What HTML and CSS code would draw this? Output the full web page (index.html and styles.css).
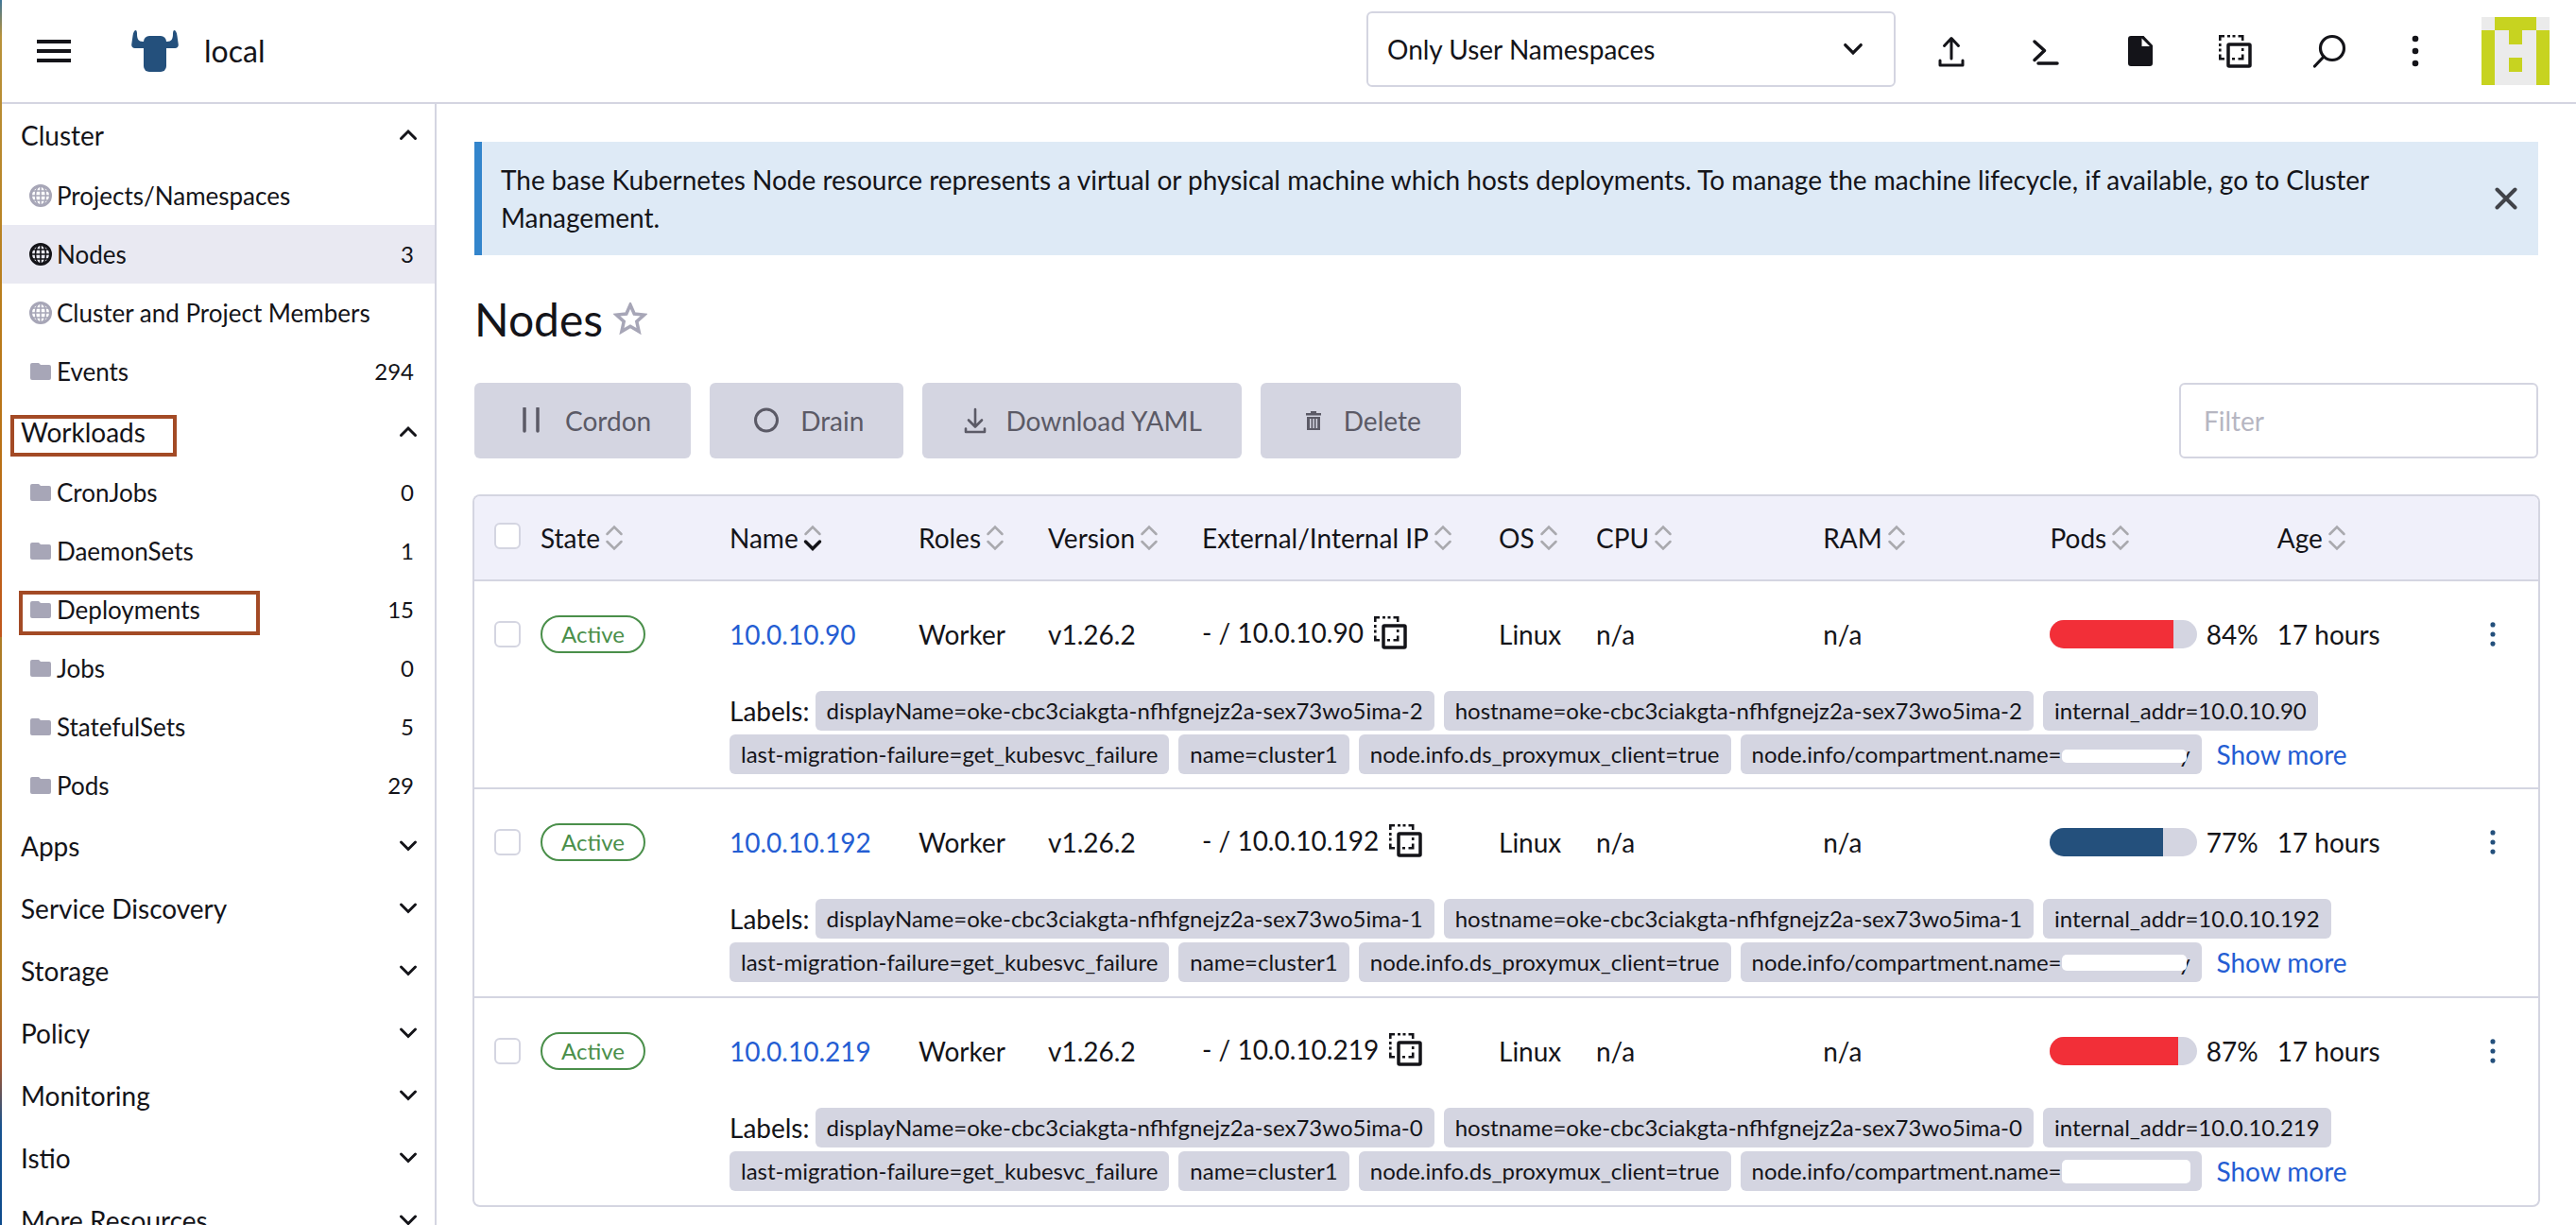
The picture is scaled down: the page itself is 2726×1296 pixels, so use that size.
FILE: index.html
```html
<!DOCTYPE html>
<html lang="en">
<head>
<meta charset="utf-8">
<meta name="viewport" content="width=device-width, initial-scale=1">
<title>Nodes - local</title>
<link rel="stylesheet" href="styles.css">
</head>
<body>
<svg class="sprite" aria-hidden="true">
  <symbol id="i-chev-down" viewBox="0 0 20 20"><path d="M2.5 6l7.5 7.500 7.500-7.500" fill="none" stroke="currentColor" stroke-width="3" stroke-linecap="round"/></symbol>
  <symbol id="i-chev-up" viewBox="0 0 20 20"><path d="M2.500 13.500l7.500-7.500 7.500 7.500" fill="none" stroke="currentColor" stroke-width="3" stroke-linecap="round"/></symbol>
  <symbol id="i-globe" viewBox="0 0 24 24"><g fill="none" stroke="currentColor"><circle cx="12" cy="12" r="10.500" stroke-width="3"/><path d="M12 1v22M1.500 12h21M3 7h18M3 17h18" stroke-width="1.600"/><ellipse cx="12" cy="12" rx="5.500" ry="10.500" stroke-width="1.600"/></g></symbol>
  <symbol id="i-folder" viewBox="0 0 24 24"><path d="M3 3h7l2 2h9a2 2 0 0 1 2 2v12a2 2 0 0 1-2 2H3a2 2 0 0 1-2-2V5a2 2 0 0 1 2-2z" fill="currentColor"/></symbol>
  <symbol id="i-copy" viewBox="0 0 36 36"><g fill="none" stroke="currentColor" stroke-width="2.600"><path d="M2.300 7V2.300H7M21.500 2.300h4.700V7M2.300 21.500v4.700H7M21.500 26.200h4.700v-4.700M10 2.300h3M15.500 2.300h3M2.300 10v3M2.300 15.500v3M15 26.200h3M26.200 15v3"/><rect x="11" y="11" width="23" height="23" rx="1" stroke-width="3.500"/></g></symbol>
  <symbol id="i-dots" viewBox="0 0 36 36"><circle cx="18" cy="5" r="3.300"/><circle cx="18" cy="18" r="3.300"/><circle cx="18" cy="31" r="3.300"/></symbol>
  <symbol id="i-sort" viewBox="0 0 20 28"><path d="M2.500 10L10 2.500l7.500 7.500" fill="none" stroke="#a9a9ae" stroke-width="2.500" stroke-linecap="round"/><path d="M2.500 18l7.500 7.500 7.500-7.500" fill="none" stroke="#a9a9ae" stroke-width="2.500" stroke-linecap="round"/></symbol>
  <symbol id="i-sort-on" viewBox="0 0 20 28"><path d="M2.500 10L10 2.500l7.500 7.500" fill="none" stroke="#a9a9ae" stroke-width="2.500" stroke-linecap="round"/><path d="M2.500 18l7.500 7.500 7.500-7.500" fill="none" stroke="#141419" stroke-width="3.500" stroke-linecap="round"/></symbol>
</svg>

<div class="window">
<div class="desktop-edge"></div>
<div class="app">
  <header class="topbar">
    <button class="icon-btn menu-btn" aria-label="Menu"><svg width="36" height="24" viewBox="0 0 36 24"><path d="M0 2h36M0 12h36M0 22h36" stroke="#141419" stroke-width="4"/></svg></button>
    <a class="brand" href="#">
      <svg width="50" height="44" viewBox="0 0 50 44" fill="#24507c" aria-hidden="true"><path d="M4.500 0C5.500 0 6 1.500 6 4c0 5 1.500 8 6 8h26c4.500 0 6-3 6-8 0-2.500.500-4 1.500-4 1.500 0 2.500 2.500 3 6l1.200 8.500c.500 3-1 4.500-3.500 4.500H3.800C1.300 19-.200 17.500.300 14.500L1.500 6c.500-3.500 1.500-6 3-6z"/><rect x="13" y="6" width="24" height="38" rx="6"/></svg>
      <span>local</span>
    </a>
    <div class="ns-select">
      <select aria-label="Namespaces"><option>Only User Namespaces</option></select>
      <svg class="ns-chev" width="22" height="22"><use href="#i-chev-down"/></svg>
    </div>
    <div class="tools">
      <button class="icon-btn" aria-label="Import YAML"><svg width="36" height="36" viewBox="0 0 36 36" fill="none" stroke="currentColor" stroke-width="3" stroke-linecap="round" stroke-linejoin="round"><path d="M18 26V5M10.500 12.500L18 4.500l7.500 8M6 28v5h24v-5"/></svg></button>
      <button class="icon-btn" aria-label="Kubectl shell"><svg width="36" height="36" viewBox="0 0 36 36" fill="none" stroke="currentColor" stroke-width="3.500" stroke-linecap="round" stroke-linejoin="round"><path d="M6 8l10.500 9.500L6 27.500M10 31h20"/></svg></button>
      <button class="icon-btn" aria-label="Download KubeConfig"><svg width="36" height="36" viewBox="0 0 36 36"><path fill="currentColor" fill-rule="evenodd" d="M8 2h13.500L31 12v19a3 3 0 0 1-3 3H8a3 3 0 0 1-3-3V5a3 3 0 0 1 3-3zm11.500 2.500V13H28z"/></svg></button>
      <button class="icon-btn" aria-label="Copy KubeConfig"><svg width="36" height="36"><use href="#i-copy"/></svg></button>
      <button class="icon-btn" aria-label="Search"><svg width="36" height="36" viewBox="0 0 36 36" fill="none" stroke="currentColor" stroke-width="3.200" stroke-linecap="round"><circle cx="21" cy="15" r="12.500"/><path d="M12 24l-9.500 10"/></svg></button>
      <button class="icon-btn dots-btn" aria-label="More"><svg width="36" height="36" fill="currentColor"><use href="#i-dots"/></svg></button>
      <button class="icon-btn" aria-label="User"><svg width="72" height="72" viewBox="0 0 5 5" shape-rendering="crispEdges"><path fill="#ebebeb" d="M0 0h5v5H0z"/><path fill="#c7d320" d="M1 0h3v1H3v1H2V1H1zM0 1h1v4H0zM4 1h1v4H4zM2 3h1v1H2z"/></svg></button>
    </div>
  </header>

  <div class="body">
  <nav class="sidebar" aria-label="Cluster">
    <button class="group">Cluster<svg width="20" height="20"><use href="#i-chev-up"/></svg></button>
    <a class="item" href="#"><svg width="24" height="24"><use href="#i-globe"/></svg><span>Projects/Namespaces</span></a>
    <a class="item active" href="#"><svg width="24" height="24"><use href="#i-globe"/></svg><span>Nodes</span><span class="count">3</span></a>
    <a class="item" href="#"><svg width="24" height="24"><use href="#i-globe"/></svg><span>Cluster and Project Members</span></a>
    <a class="item" href="#"><svg width="24" height="24"><use href="#i-folder"/></svg><span>Events</span><span class="count">294</span></a>
    <button class="group marked">Workloads<svg width="20" height="20"><use href="#i-chev-up"/></svg></button>
    <a class="item" href="#"><svg width="24" height="24"><use href="#i-folder"/></svg><span>CronJobs</span><span class="count">0</span></a>
    <a class="item" href="#"><svg width="24" height="24"><use href="#i-folder"/></svg><span>DaemonSets</span><span class="count">1</span></a>
    <a class="item marked" href="#"><svg width="24" height="24"><use href="#i-folder"/></svg><span>Deployments</span><span class="count">15</span></a>
    <a class="item" href="#"><svg width="24" height="24"><use href="#i-folder"/></svg><span>Jobs</span><span class="count">0</span></a>
    <a class="item" href="#"><svg width="24" height="24"><use href="#i-folder"/></svg><span>StatefulSets</span><span class="count">5</span></a>
    <a class="item" href="#"><svg width="24" height="24"><use href="#i-folder"/></svg><span>Pods</span><span class="count">29</span></a>
    <button class="group">Apps<svg width="20" height="20"><use href="#i-chev-down"/></svg></button>
    <button class="group">Service Discovery<svg width="20" height="20"><use href="#i-chev-down"/></svg></button>
    <button class="group">Storage<svg width="20" height="20"><use href="#i-chev-down"/></svg></button>
    <button class="group">Policy<svg width="20" height="20"><use href="#i-chev-down"/></svg></button>
    <button class="group">Monitoring<svg width="20" height="20"><use href="#i-chev-down"/></svg></button>
    <button class="group">Istio<svg width="20" height="20"><use href="#i-chev-down"/></svg></button>
    <button class="group">More Resources<svg width="20" height="20"><use href="#i-chev-down"/></svg></button>
  </nav>

  <main class="main">
    <div class="banner">
      <p>The base Kubernetes Node resource represents a virtual or physical machine which hosts deployments. To manage the machine lifecycle, if available, go to Cluster Management.</p>
      <button class="icon-btn" aria-label="Close"><svg width="24" height="24" viewBox="0 0 24 24"><path d="M2.500 2.500l19 19M21.500 2.500l-19 19" stroke="#414349" stroke-width="4" stroke-linecap="round"/></svg></button>
    </div>

    <div class="title">
      <h1>Nodes</h1>
      <button class="icon-btn" aria-label="Favorite"><svg width="36" height="36" viewBox="0 0 36 36"><path d="M18 2.500l4.200 9.500 10.500 1.100-7.900 7 2.300 10.500-9.100-5.400-9.100 5.400 2.300-10.500-7.900-7L13.800 12z" fill="none" stroke="#a7a6b7" stroke-width="3.500"/></svg></button>
    </div>

    <div class="actions">
      <button class="btn"><svg width="36" height="28" viewBox="0 0 36 28" fill="none" stroke="currentColor" stroke-width="3.500" stroke-linecap="round"><path d="M11 1v24M25 1v24"/></svg>Cordon</button>
      <button class="btn"><svg width="36" height="28" viewBox="0 0 36 28" fill="none" stroke="currentColor" stroke-width="3"><circle cx="18" cy="13.500" r="11.500"/></svg>Drain</button>
      <button class="btn"><svg width="28" height="28" viewBox="0 0 28 28" fill="none" stroke="currentColor" stroke-width="2.600" stroke-linecap="round" stroke-linejoin="round"><path d="M14 2v18M7 13.500l7 7 7-7M4 22.500V26h20v-3.500"/></svg>Download YAML</button>
      <button class="btn"><svg width="28" height="28" viewBox="0 0 28 28"><path fill="currentColor" fill-rule="evenodd" d="M6 6h5V4h6v2h5v2.500H6zM7 10h14v14H7zm3 2v10h1.500V12zm3.300 0v10h1.500V12zm3.300 0v10h1.500V12z"/></svg>Delete</button>
      <input class="filter" type="text" placeholder="Filter" aria-label="Filter">
    </div>

    <table class="nodes">
      <colgroup><col class="c-check"><col class="c-state"><col class="c-name"><col class="c-roles"><col class="c-version"><col class="c-ip"><col class="c-os"><col class="c-meter"><col class="c-meter"><col class="c-meter"><col></colgroup>
      <thead>
        <tr>
          <th><input type="checkbox" aria-label="Select all"></th>
          <th><span class="th">State<svg width="20" height="28"><use href="#i-sort"/></svg></span></th>
          <th><span class="th">Name<svg width="20" height="28"><use href="#i-sort-on"/></svg></span></th>
          <th><span class="th">Roles<svg width="20" height="28"><use href="#i-sort"/></svg></span></th>
          <th><span class="th">Version<svg width="20" height="28"><use href="#i-sort"/></svg></span></th>
          <th><span class="th">External/Internal IP<svg width="20" height="28"><use href="#i-sort"/></svg></span></th>
          <th><span class="th">OS<svg width="20" height="28"><use href="#i-sort"/></svg></span></th>
          <th><span class="th">CPU<svg width="20" height="28"><use href="#i-sort"/></svg></span></th>
          <th><span class="th">RAM<svg width="20" height="28"><use href="#i-sort"/></svg></span></th>
          <th><span class="th">Pods<svg width="20" height="28"><use href="#i-sort"/></svg></span></th>
          <th colspan="2"><span class="th">Age<svg width="20" height="28"><use href="#i-sort"/></svg></span></th>
        </tr>
      </thead>
      <tbody>
        <tr class="node">
          <td><input type="checkbox" aria-label="Select 10.0.10.90"></td>
          <td><span class="badge">Active</span></td>
          <td><a href="#">10.0.10.90</a></td>
          <td>Worker</td>
          <td>v1.26.2</td>
          <td class="ip-cell"><span class="ip">- / 10.0.10.90<button class="icon-btn" aria-label="Copy IP"><svg width="36" height="36"><use href="#i-copy"/></svg></button></span></td>
          <td>Linux</td>
          <td>n/a</td>
          <td>n/a</td>
          <td><span class="pods"><span class="bar"><span class="fill high" style="width:84%"></span></span>84%</span></td>
          <td>17 hours</td>
          <td class="more"><button class="icon-btn" aria-label="Actions"><svg width="28" height="28" fill="currentColor"><use href="#i-dots"/></svg></button></td>
        </tr>
        <tr class="labels">
          <td colspan="2"></td>
          <td colspan="10">
            <div class="chips first"><span>Labels:</span><span class="chip">displayName=oke-cbc3ciakgta-nfhfgnejz2a-sex73wo5ima-2</span><span class="chip">hostname=oke-cbc3ciakgta-nfhfgnejz2a-sex73wo5ima-2</span><span class="chip">internal_addr=10.0.10.90</span></div>
            <div class="chips"><span class="chip">last-migration-failure=get_kubesvc_failure</span><span class="chip">name=cluster1</span><span class="chip">node.info.ds_proxymux_client=true</span><span class="chip">node.info/compartment.name=<span class="hidden-name thin">y</span></span><a class="show-more" href="#">Show more</a></div>
          </td>
        </tr>
        <tr class="node">
          <td><input type="checkbox" aria-label="Select 10.0.10.192"></td>
          <td><span class="badge">Active</span></td>
          <td><a href="#">10.0.10.192</a></td>
          <td>Worker</td>
          <td>v1.26.2</td>
          <td class="ip-cell"><span class="ip">- / 10.0.10.192<button class="icon-btn" aria-label="Copy IP"><svg width="36" height="36"><use href="#i-copy"/></svg></button></span></td>
          <td>Linux</td>
          <td>n/a</td>
          <td>n/a</td>
          <td><span class="pods"><span class="bar"><span class="fill" style="width:77%"></span></span>77%</span></td>
          <td>17 hours</td>
          <td class="more"><button class="icon-btn" aria-label="Actions"><svg width="28" height="28" fill="currentColor"><use href="#i-dots"/></svg></button></td>
        </tr>
        <tr class="labels">
          <td colspan="2"></td>
          <td colspan="10">
            <div class="chips first"><span>Labels:</span><span class="chip">displayName=oke-cbc3ciakgta-nfhfgnejz2a-sex73wo5ima-1</span><span class="chip">hostname=oke-cbc3ciakgta-nfhfgnejz2a-sex73wo5ima-1</span><span class="chip">internal_addr=10.0.10.192</span></div>
            <div class="chips"><span class="chip">last-migration-failure=get_kubesvc_failure</span><span class="chip">name=cluster1</span><span class="chip">node.info.ds_proxymux_client=true</span><span class="chip">node.info/compartment.name=<span class="hidden-name">y</span></span><a class="show-more" href="#">Show more</a></div>
          </td>
        </tr>
        <tr class="node">
          <td><input type="checkbox" aria-label="Select 10.0.10.219"></td>
          <td><span class="badge">Active</span></td>
          <td><a href="#">10.0.10.219</a></td>
          <td>Worker</td>
          <td>v1.26.2</td>
          <td class="ip-cell"><span class="ip">- / 10.0.10.219<button class="icon-btn" aria-label="Copy IP"><svg width="36" height="36"><use href="#i-copy"/></svg></button></span></td>
          <td>Linux</td>
          <td>n/a</td>
          <td>n/a</td>
          <td><span class="pods"><span class="bar"><span class="fill high" style="width:87%"></span></span>87%</span></td>
          <td>17 hours</td>
          <td class="more"><button class="icon-btn" aria-label="Actions"><svg width="28" height="28" fill="currentColor"><use href="#i-dots"/></svg></button></td>
        </tr>
        <tr class="labels">
          <td colspan="2"></td>
          <td colspan="10">
            <div class="chips first"><span>Labels:</span><span class="chip">displayName=oke-cbc3ciakgta-nfhfgnejz2a-sex73wo5ima-0</span><span class="chip">hostname=oke-cbc3ciakgta-nfhfgnejz2a-sex73wo5ima-0</span><span class="chip">internal_addr=10.0.10.219</span></div>
            <div class="chips"><span class="chip">last-migration-failure=get_kubesvc_failure</span><span class="chip">name=cluster1</span><span class="chip">node.info.ds_proxymux_client=true</span><span class="chip">node.info/compartment.name=<span class="hidden-name full"></span></span><a class="show-more" href="#">Show more</a></div>
          </td>
        </tr>
      </tbody>
    </table>
  </main>
  </div>
</div>
</div>
</body>
</html>
```
FILE: styles.css
```css
:root {
  --text: #141419;
  --border: #d4d5e1;
  --muted: #a7a6b7;
  --primary: #24507c;
  --link: #245dd3;
}

*, *::before, *::after { box-sizing: border-box; }

body {
  margin: 0;
  background: #fff;
  color: var(--text);
  font: 28px/40px Lato, "Liberation Sans", sans-serif;
}

button, input, select { font: inherit; color: inherit; }
a { color: var(--link); text-decoration: none; }
svg { display: block; flex: none; }
.sprite { position: absolute; width: 0; height: 0; }

.icon-btn {
  display: flex;
  padding: 0;
  border: 0;
  background: none;
  cursor: pointer;
}

.window { display: flex; height: 100vh; }

.desktop-edge {
  flex: 0 0 2px;
  background: linear-gradient(#3f7698 0, #b8923a 3%, #b97d1c 25%, #b97016 38%, #c0561c 52%, #ad7c26 52%, #b07a20 80%, #a3552c 87%, #175390 92%, #0d4a8c 100%);
}

.app { flex: 1; min-width: 0; display: flex; flex-direction: column; }

/* Top bar */
.topbar {
  display: flex;
  align-items: center;
  flex: 0 0 110px;
  padding: 0 28px 0 37px;
  border-bottom: 2px solid var(--border);
}
.brand {
  display: flex;
  align-items: center;
  gap: 27px;
  margin-left: 64px;
  color: var(--text);
  font-size: 32px;
}
.ns-select { display: grid; align-items: center; width: 560px; margin: 0 41px 4px auto; }
.ns-select select {
  grid-area: 1 / 1;
  height: 80px;
  padding: 0 60px 0 20px;
  border: 2px solid var(--border);
  border-radius: 6px;
  background: none;
  appearance: none;
}
.ns-chev { grid-area: 1 / 1; justify-self: end; margin-right: 34px; pointer-events: none; }
.tools { display: flex; align-items: center; gap: 64px; }
.dots-btn { margin: 0 -12px 0 -9px; }

/* Side navigation */
.body { flex: 1; display: flex; min-height: 0; }
.sidebar {
  flex: 0 0 460px;
  overflow-y: auto;
  scrollbar-width: none;
  border-right: 2px solid var(--border);
}
.group, .item { position: relative; display: flex; align-items: center; width: 100%; }
.group {
  justify-content: space-between;
  height: 66px;
  padding: 0 18px 0 20px;
  border: 0;
  background: none;
}
.item {
  gap: 5px;
  height: 62px;
  padding: 0 22px 0 29px;
  color: var(--text);
  font-size: 26px;
}
.item svg { color: var(--muted); }
.item.active { background: #e9e9f2; }
.item.active svg { color: var(--text); }
.count { margin-left: auto; font-size: 24px; }

/* Highlight frames drawn over navigation entries */
.marked::after {
  content: "";
  position: absolute;
  border: 4px solid #a34a25;
}
.group.marked::after { left: 9px; top: 15px; width: 176px; height: 44px; }
.item.marked::after { left: 18px; top: 11px; width: 255px; height: 47px; }

/* Main */
.main { flex: 1; min-width: 0; overflow-y: auto; scrollbar-width: none; padding: 40px 40px 16px; }

.banner {
  display: flex;
  align-items: center;
  padding: 20px 22px 20px 20px;
  border-left: 8px solid #3385cc;
  background: #deeaf6;
}
.banner p { flex: 1; margin: 0; padding-right: 60px; }

.title { display: flex; align-items: center; gap: 11px; margin: 36px 0; }
.title h1 { margin: 0; font-size: 48px; line-height: 63px; font-weight: 400; }

.actions { display: flex; gap: 20px; margin-bottom: 40px; }
.btn {
  display: flex;
  align-items: center;
  gap: 18px;
  height: 80px;
  padding: 0 42px;
  border: 0;
  border-radius: 6px;
  background: var(--border);
  color: #5b5a66;
}
.filter {
  width: 380px;
  height: 80px;
  margin-left: auto;
  padding: 0 24px;
  border: 2px solid var(--border);
  border-radius: 6px;
}
.filter::placeholder { color: #b6b6c2; opacity: 1; }

/* Node table */
.nodes {
  width: 100%;
  table-layout: fixed;
  border-spacing: 0;
  border-radius: 6px;
  box-shadow: 0 0 0 2px var(--border);
}
.c-check { width: 60px; }
.c-state, .c-name { width: 200px; }
.c-roles { width: 137px; }
.c-version { width: 163px; }
.c-ip { width: 314px; }
.c-os { width: 103px; }
.c-meter { width: 11%; }

th, td { padding: 0 10px; text-align: left; font-weight: 400; white-space: nowrap; }
th { height: 90px; background: #f0f0fa; border-bottom: 2px solid var(--border); }
th:first-child { border-top-left-radius: 6px; padding-bottom: 4px; }
th:last-child { border-top-right-radius: 6px; }
th:first-child, td:first-child { padding-left: 21px; }
.th { display: flex; align-items: center; gap: 5px; }

input[type="checkbox"] {
  display: block;
  width: 28px;
  height: 28px;
  margin: 0;
  appearance: none;
  border: 2px solid var(--border);
  border-radius: 6px;
  background: #fff;
}

.node td { height: 114px; padding-bottom: 2px; }
.badge {
  display: block;
  width: max-content;
  padding: 0 20px;
  border: 2px solid #4a8f4a;
  border-radius: 20px;
  color: #4a8f4a;
  font-size: 24px;
  line-height: 36px;
}
.node .ip-cell { padding-bottom: 6px; }
.ip { display: flex; align-items: center; gap: 10px; }
.pods { display: flex; align-items: center; gap: 10px; }
.bar { width: 156px; height: 30px; border-radius: 15px; overflow: hidden; background: var(--border); }
.fill { display: block; height: 100%; background: var(--primary); }
.fill.high { background: #f22f38; }
.more { color: var(--primary); }
.more .icon-btn { margin: 0 24px 0 auto; }

.labels td { padding-bottom: 13px; }
.labels:not(:last-child) td { border-bottom: 2px solid var(--border); }
.labels:nth-child(2) td { padding-bottom: 12px; }
.chips { display: flex; align-items: center; gap: 10px; height: 46px; }
.chips.first > span:first-child { margin-right: -4px; }
.chip {
  padding: 0 12px;
  border-radius: 6px;
  background: var(--border);
  font-size: 24px;
  line-height: 42px;
}
.show-more { margin-left: 6px; }

/* Label value covered by a blank patch */
.hidden-name {
  position: relative;
  display: inline-block;
  width: 136px;
  height: 42px;
  vertical-align: top;
  text-align: right;
}
.hidden-name::after {
  content: "";
  position: absolute;
  inset: 13px 4px 12px 0;
  border-radius: 5px;
  background: #fff;
}
.hidden-name.thin::after { inset: 16px 4px 12px 0; }
.hidden-name.full::after { inset: 9px 0 8px; }
```
